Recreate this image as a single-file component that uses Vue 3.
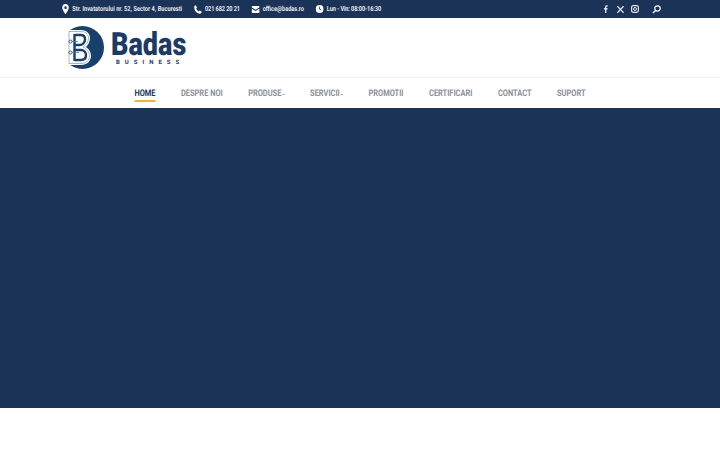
<template>
  <div class="page">
    <div class="topbar">
      <div class="topbar__info">
        <span class="info-item info-item--address">
          <svg width="8.750" height="10" viewBox="0 0 8 10" preserveAspectRatio="none"><path fill-rule="evenodd" d="M4 0a3.700 3.700 0 0 0-3.700 3.700C.3 6.200 4 10 4 10s3.700-3.800 3.700-6.300A3.700 3.700 0 0 0 4 0zm0 2.300a1.400 1.400 0 1 1 0 2.800 1.400 1.400 0 0 1 0-2.800z" fill="#fff"/></svg>
          <span>Str. Invatatorului nr. 52, Sector 4, Bucuresti</span>
        </span>
        <span class="info-item info-item--digits">
          <svg width="10" height="9" viewBox="0 0 9 9" preserveAspectRatio="none"><path d="M2 .3 3.300 2.500 2.500 3.500c.6 1.300 1.600 2.300 2.900 2.900l1-.9L8.700 6.800c-.2 1.100-1 1.900-2 1.900C3.200 8.500.4 5.600.2 2.200.2 1.300 1 .5 2 .3z" fill="#fff"/></svg>
          <span>021 682 20 21</span>
        </span>
        <span class="info-item">
          <svg width="10" height="7" viewBox="0 0 9 7" preserveAspectRatio="none"><path d="M0 0h9v1.200L4.500 3.700 0 1.200zM0 2.400l4.500 2.500L9 2.400V7H0z" fill="#fff"/></svg>
          <span>office@badas.ro</span>
        </span>
        <span class="info-item info-item--digits">
          <svg width="10" height="8" viewBox="0 0 9 9" preserveAspectRatio="none"><circle cx="4.500" cy="4.500" r="4.500" fill="#fff"/><path d="M4.500 2v2.700l1.800 1" fill="none" stroke="#1c3358" stroke-width="1"/></svg>
          <span>Lun - Vin: 08:00-16:30</span>
        </span>
      </div>
      <div class="topbar__social">
        <svg width="6" height="8" viewBox="0 0 6 8"><path d="M2 8V4.400H.9V3H2V2C2 .8 2.700.2 3.700.2h1v1.300H4c-.4 0-.6.2-.6.600V3h1.200l-.2 1.400h-1V8z" fill="#dfe4ec"/></svg>
        <svg class="x-icon" width="7" height="7" viewBox="0 0 7 7"><path d="M.4.200 6.600 6.800M6.600.200.400 6.800" stroke="#dfe4ec" stroke-width="1.300" fill="none"/></svg>
        <svg width="8" height="8" viewBox="0 0 8 8"><rect x=".6" y=".6" width="6.800" height="6.800" rx="1.800" fill="none" stroke="#dfe4ec" stroke-width="1.200"/><circle cx="4" cy="4" r="1.500" fill="none" stroke="#dfe4ec"/></svg>
        <svg class="search" width="9" height="9" viewBox="0 0 9 9"><circle cx="5.500" cy="3.500" r="2.700" fill="none" stroke="#fff" stroke-width="1.200"/><path d="M3.500 5.500 1 8" stroke="#fff" stroke-width="1.500"/></svg>
      </div>
    </div>

    <header class="brand">
      <div class="logo">
        <svg width="38" height="43" viewBox="0 0 38 43" class="logo__mark">
          <circle cx="15.500" cy="21.500" r="21.500" fill="#17406c"/>
          <path d="M0 4H14C20 4 23 8 23 12 23 16 21 19 19 21 22 23 24 26 24 30 24 35 20 39 14 39H0z" fill="#fff"/>
          <path d="M2 5.500H14C19 5.500 21.500 8.500 21.500 12 21.500 15.500 19.500 19 16 21 20 23 22.500 26 22.500 30 22.500 34.500 19 37.500 14 37.500H2z" fill="none" stroke="#8fa3b8" stroke-width=".8"/>
          <path d="M7.500 9H13.500C16.500 9 18 10.500 18 13 18 16 16 19 13 19H7.500M7.500 24H14C17 24 19 26.500 19 29 19 32 17 34 14 34H7.500M7.500 8V35" fill="none" stroke="#17406c" stroke-width="2.400"/>
          <path d="M4.500 15.500H11M4.500 26.500H12" stroke="#5d7896" stroke-width=".8"/>
          <circle cx="3.500" cy="15.500" r="1.500" fill="#fff" stroke="#17406c" stroke-width=".8"/>
          <circle cx="3.500" cy="26.500" r="1.500" fill="#fff" stroke="#17406c" stroke-width=".8"/>
        </svg>
        <div class="logo__text">
          <span class="logo__name">Badas</span>
          <span class="logo__sub">BUSINESS</span>
        </div>
      </div>
    </header>

    <nav class="nav">
      <a v-for="item in menu" :key="item.label" class="nav__link" :class="{ active: item.active }">
        {{ item.label }}<i v-if="item.sub" class="caret"></i>
      </a>
    </nav>

    <section class="hero"></section>
  </div>
</template>

<script setup>
const menu = [
  { label: 'HOME', active: true },
  { label: 'DESPRE NOI' },
  { label: 'PRODUSE', sub: true },
  { label: 'SERVICII', sub: true },
  { label: 'PROMOTII' },
  { label: 'CERTIFICARI' },
  { label: 'CONTACT' },
  { label: 'SUPORT' }
]
</script>

<style>
html, body {
  background: #fff;
}
</style>

<style scoped>
.page {
  width: 720px;
  height: 450px;
  overflow: hidden;
  background: #fff;
  font-family: Roboto, "Liberation Sans", sans-serif;
  text-rendering: geometricPrecision;
}

.topbar {
  height: 18px;
  padding: 0 59px 0 62px;
  display: flex;
  align-items: center;
  justify-content: space-between;
  background: #1c3358;
}

/* no condensed face installed, so the row is squeezed */
.topbar__info {
  display: flex;
  align-items: center;
  gap: 14.500px;
  transform: scaleX(0.8);
  transform-origin: left center;
}

.info-item {
  display: flex;
  align-items: center;
  gap: 4px;
  color: #e4e8ee;
  font-size: 7px;
  font-weight: 700;
  white-space: nowrap;
}

.info-item--address {
  letter-spacing: 0.055px;
}

.info-item--digits {
  letter-spacing: -0.13px;
}

.topbar__social {
  display: flex;
  align-items: center;
  gap: 8px;
}

.x-icon {
  margin-right: -1px;
}

.search {
  margin-left: 5px;
}

.brand {
  height: 59px;
  padding-left: 67px;
  display: flex;
  align-items: center;
  border-bottom: 1px solid #eeeeee;
}

.logo {
  display: flex;
  align-items: center;
  gap: 6px;
}

.logo__text {
  display: flex;
  flex-direction: column;
  align-items: flex-start;
  width: 75px;
}

.logo__name {
  color: #1c3a63;
  font-size: 32px;
  font-weight: 900;
  line-height: 29px;
  transform: scaleX(0.845);
  transform-origin: left center;
}

.logo__sub {
  margin-left: 5px;
  color: #1c3a63;
  font-size: 6px;
  font-weight: 700;
  line-height: 7px;
  letter-spacing: 5px;
  white-space: nowrap;
}

.nav {
  height: 30px;
  display: flex;
  justify-content: center;
  gap: 31.600px;
  background: #fff;
  transform: scaleX(0.808);
}

.nav__link {
  height: 24px;
  box-sizing: border-box;
  padding-top: 9px;
  display: flex;
  align-items: center;
  border-bottom: 2px solid transparent;
  color: #8a9099;
  font-size: 9.200px;
  font-weight: 700;
  white-space: nowrap;
}

.nav__link.active {
  color: #1c3358;
  border-bottom-color: #f0b43c;
}

.caret {
  width: 3px;
  height: 1px;
  margin-left: 1px;
  margin-top: 2px;
  background: #a8adb4;
}

.hero {
  height: 300px;
  background: #1c3358;
}
</style>
